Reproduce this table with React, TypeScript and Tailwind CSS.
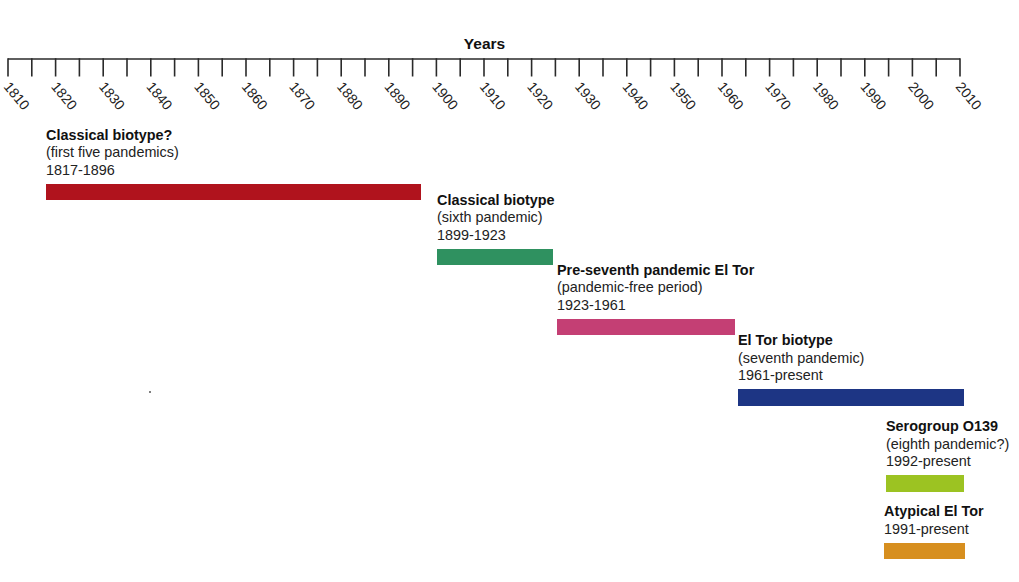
import React from 'react';

type Period = {
  title: string;
  sub?: string;
  range: string;
  color: string;
  left: string;
  width: string;
  top: string;
};

const periods: Period[] = [
  { title: 'Classical biotype?', sub: '(first five pandemics)', range: '1817-1896', color: 'bg-[#b0131d]', left: 'ml-[46px]', width: 'w-[375px]', top: 'mt-[6.5px]' },
  { title: 'Classical biotype', sub: '(sixth pandemic)', range: '1899-1923', color: 'bg-[#2f9160]', left: 'ml-[437px]', width: 'w-[116px]', top: 'mt-[-8.5px]' },
  { title: 'Pre-seventh pandemic El Tor', sub: '(pandemic-free period)', range: '1923-1961', color: 'bg-[#c43f74]', left: 'ml-[557px]', width: 'w-[178px]', top: 'mt-[-3.5px]' },
  { title: 'El Tor biotype', sub: '(seventh pandemic)', range: '1961-present', color: 'bg-[#1d3584]', left: 'ml-[738px]', width: 'w-[226px]', top: 'mt-[-2.8px]' },
  { title: 'Serogroup O139', sub: '(eighth pandemic?)', range: '1992-present', color: 'bg-[#9cc322]', left: 'ml-[886px]', width: 'w-[78px]', top: 'mt-[12.5px]' },
  { title: 'Atypical El Tor', range: '1991-present', color: 'bg-[#d78f1f]', left: 'ml-[884px]', width: 'w-[81px]', top: 'mt-[11.5px]' },
];

const X0 = 8;
const STEP = 23.8;

function Axis() {
  const ticks = Array.from({ length: 41 }, (_, i) => i);
  return (
    <svg width={1019} height={120} className="block">
      <text x={484.5} y={49} textAnchor="middle" fontSize={15.5} fontWeight={700} fill="#111" fontFamily="'Liberation Sans', Arial, sans-serif">
        Years
      </text>
      <line x1={X0} y1={59} x2={X0 + 40 * STEP} y2={59} stroke="#2a2a2a" strokeWidth={1.6} />
      {ticks.map((i) => (
        <line key={i} x1={X0 + i * STEP} y1={58.2} x2={X0 + i * STEP} y2={76.5} stroke="#2a2a2a" strokeWidth={1.6} />
      ))}
      {ticks
        .filter((i) => i % 2 === 0)
        .map((i) => {
          const x = X0 + i * STEP - 5;
          return (
            <text
              key={i}
              transform={`translate(${x} 87) rotate(50)`}
              fontSize={14}
              fill="#222"
              fontFamily="'Liberation Sans', Arial, sans-serif"
            >
              {1810 + i * 5}
            </text>
          );
        })}
    </svg>
  );
}

export default function App() {
  return (
    <div className="relative w-[1019px] h-[582px] overflow-hidden bg-white font-['Liberation_Sans',Arial,sans-serif] text-[14.4px] leading-[17.5px] text-[#222]">
      <Axis />
      <div className="flex flex-col">
        {periods.map((p) => (
          <div key={p.range + p.title} className={`flex flex-col items-start ${p.left} ${p.top}`}>
            <div className="font-bold text-[#111] whitespace-nowrap">{p.title}</div>
            {p.sub && <div className="whitespace-nowrap">{p.sub}</div>}
            <div className="whitespace-nowrap">{p.range}</div>
            <div className={`mt-[4.5px] h-[16.5px] ${p.width} ${p.color}`} />
          </div>
        ))}
      </div>
      <div className="absolute left-[149px] top-[391px] h-[2px] w-[2px] rounded-full bg-[#555]" />
    </div>
  );
}
